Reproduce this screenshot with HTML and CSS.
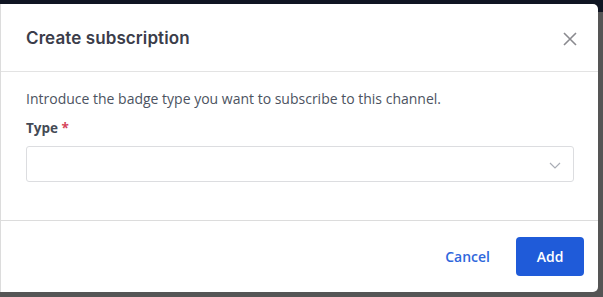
FILE: index.html
```html
<!DOCTYPE html>
<html>
  <head>
    <meta charset="utf-8">
    <title>Create subscription</title>
    <link rel="stylesheet" href="styles.css">
  </head>
  <body>
    <div class="backdrop">
      <div class="modal">
        <div class="modal-header">
          <h2>Create subscription</h2>
          <button class="close" aria-label="Close">
            <svg width="14" height="14" viewBox="0 0 14 14"><path d="M1 1L13 13M13 1L1 13" stroke="#8a8a8f" stroke-width="1.6" fill="none"/></svg>
          </button>
        </div>
        <div class="modal-body">
          <p class="intro">Introduce the badge type you want to subscribe to this channel.</p>
          <label class="field-label">Type <span class="req">*</span></label>
          <div class="select">
            <svg width="12" height="7" viewBox="0 0 12 7"><path d="M1 1L6 6L11 1" stroke="#a9adb5" stroke-width="1.2" fill="none"/></svg>
          </div>
        </div>
        <div class="modal-footer">
          <button class="btn-link">Cancel</button>
          <button class="btn-primary">Add</button>
        </div>
      </div>
    </div>
  </body>
</html>
```

FILE: styles.css
```css
*, *::before, *::after {
  padding: 0;
  margin: 0;
  border: 0;
  box-sizing: border-box;
}

html, body {height: 100%;}
body {font-family: "Open Sans", "Liberation Sans", sans-serif; color: #484f5c;}

.backdrop {
  height: 100%;
  padding-top: 4px;
  background: linear-gradient(#0f1522 0 12px, #555 12px);
}

.modal {
  width: 598px;
  height: 288px;
  background: #fff;
  border-left: 1px solid #dcdcdc;
  border-radius: 0 5px 5px 0;
  display: flex;
  flex-direction: column;
}

.modal-header {
  height: 68px;
  display: flex;
  align-items: center;
  justify-content: space-between;
  padding: 0 21px 0 25px;
  border-bottom: 1px solid #e3e3e3;
}
.modal-header h2 {font-family: "Inter", "Liberation Sans", sans-serif; font-size: 17px; font-weight: 600; color: #3b3d4a; letter-spacing: 0.1px;}
.close {background: none; display: flex; padding-top: 2px;}

.modal-body {
  flex: 0 0 149px;
  padding: 17px 24px 0 25px;
  border-bottom: 1px solid #dcdcdc;
}
.intro {font-size: 14px; line-height: 20px; color: #4c5361;}
.field-label {display: block; margin-top: 9px; font-size: 13.5px; font-weight: 700; color: #444a55; line-height: 20px;}
.req {color: #d6455b;}
.select {
  margin-top: 8px;
  height: 36px;
  border: 1px solid #dcdde0;
  border-radius: 3px;
  display: flex;
  align-items: center;
  justify-content: flex-end;
  padding: 2px 12px 0 0;
}

.modal-footer {
  flex: 1;
  display: flex;
  align-items: center;
  justify-content: flex-end;
  gap: 26px;
  padding: 0 14px 0 0;
}
button {font-family: "Open Sans", "Liberation Sans", sans-serif; cursor: pointer;}
.btn-link {background: none; color: #2f67dc; font-size: 14px; font-weight: 600;}
.btn-primary {
  width: 68px;
  height: 39px;
  background: #1f5bd9;
  color: #fff;
  font-size: 14px;
  font-weight: 600;
  border-radius: 4px;
}
```
